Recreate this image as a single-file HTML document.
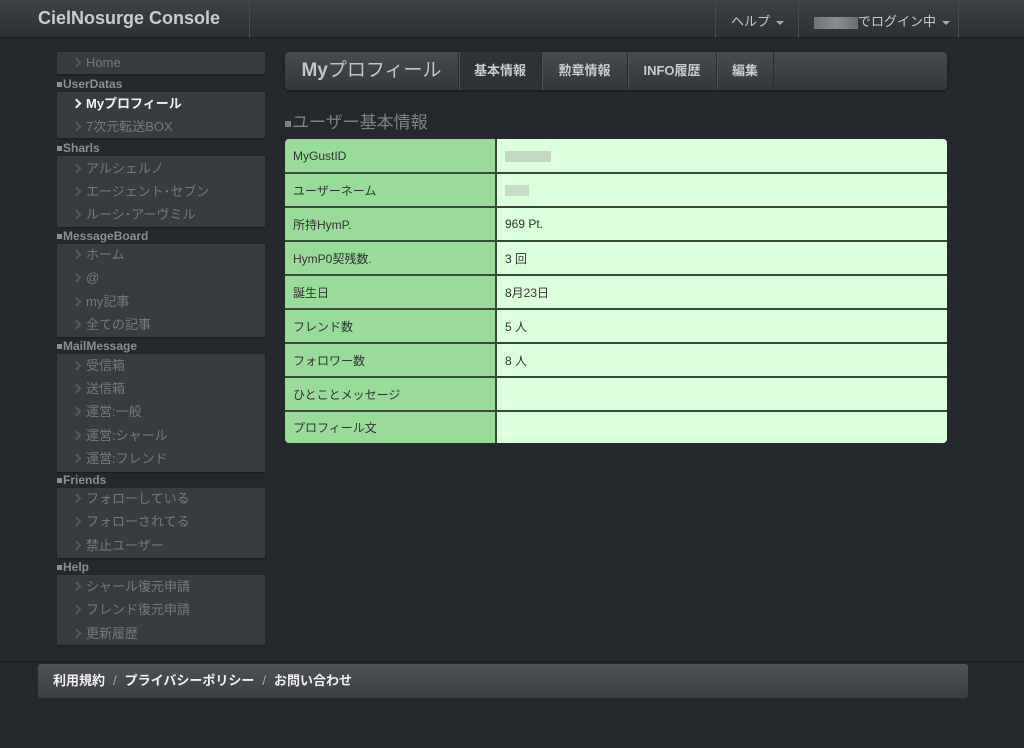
<!DOCTYPE html>
<html><head><meta charset="utf-8">
<style>
*{margin:0;padding:0;box-sizing:border-box}
body{width:1024px;height:748px;background:#25282d;font-family:"Liberation Sans","Noto Sans CJK JP",sans-serif;position:relative;overflow:hidden;font-size:13px}
.nav{position:absolute;left:0;top:0;width:1024px;height:38px;background:linear-gradient(#3e4247,#2c2f33);border-bottom:1px solid #1c1e21}
.brand{position:absolute;left:38px;top:8px;font-size:18px;font-weight:bold;color:#c9cbcd}
.div{position:absolute;top:0;width:1px;height:38px;background:#1f2124;border-right:1px solid #474a4f}
.navt{position:absolute;top:11px;font-size:13px;color:#c8cacc}
.caret{display:inline-block;width:0;height:0;border-left:4px solid transparent;border-right:4px solid transparent;border-top:4px solid #aaa;vertical-align:middle;margin-left:6px}
.blur{display:inline-block;background:linear-gradient(90deg,#6f7276,#8b8e91,#6a6d70);vertical-align:middle}
.box{position:absolute;left:57px;width:208px;background:#383c40;box-shadow:0 1px 1px #1b1d20}
.hd{position:absolute;left:57px;font-size:12px;font-weight:bold;color:#8a8d91;height:14px;line-height:14px}
.hd:before{content:"";display:inline-block;width:5px;height:5px;background:#8a8d91;margin-right:1px;vertical-align:1px}
.it{position:absolute;left:73px;font-size:13px;color:#74777b;line-height:16px}
.it:before{content:"";display:inline-block;width:5px;height:5px;border-right:2px solid #55585c;border-top:2px solid #55585c;transform:rotate(45deg);margin-right:6px;vertical-align:1px}
.it.on{color:#f1f1f1;font-weight:bold}
.it.on:before{border-color:#eee}
.tabs{position:absolute;left:285px;top:52px;width:662px;height:38px;border-radius:4px;background:linear-gradient(#474b50,#34373b);box-shadow:0 1px 2px #16181a}
.tt{position:absolute;top:0;height:38px;line-height:38px;text-align:center;color:#c9cbcd;font-size:13px;font-weight:bold;border-left:1px solid #2a2d30;box-shadow:inset 1px 0 #4e5257}
.h2{position:absolute;left:285px;top:108px;font-size:17px;color:#7d8084}
.h2:before{content:"";display:inline-block;width:6px;height:6px;background:#7d8084;margin-right:1px;vertical-align:1px}
table{position:absolute;left:285px;top:139px;width:662px;border-collapse:collapse;border-radius:4px;overflow:hidden}
td{height:34px;border-bottom:2px solid #3a4a3a;padding-left:8px;font-size:12px;color:#333}
td.l{width:211px;background:#98dc98;border-right:2px solid #3a4a3a}
td.v{background:#dcffdc}
tr:last-child td{border-bottom:none;height:32px}
.fline{position:absolute;left:0;top:661px;width:1024px;height:1px;background:#1b1d20}
.foot{position:absolute;left:38px;top:664px;width:930px;height:34px;border-radius:3px;background:linear-gradient(#4e5256,#3b3e42);font-size:13px;font-weight:bold;color:#f0f0f0;line-height:34px;padding-left:15px}
.foot span{color:#aaa;margin:0 8px;font-weight:normal}
</style></head><body>
<div class="nav">
 <div class="brand">CielNosurge Console</div>
 <div class="div" style="left:249px"></div>
 <div class="div" style="left:715px"></div>
 <div class="div" style="left:798px"></div>
 <div class="div" style="left:958px"></div>
 <div class="navt" style="left:731px">ヘルプ<span class="caret"></span></div>
 <div class="navt" style="left:814px"><span class="blur" style="width:44px;height:12px"></span>でログイン中<span class="caret"></span></div>
</div>

<div class="box" style="top:52px;height:22px"></div><div class="it" style="top:55px">Home</div>
<div class="hd" style="top:77px">UserDatas</div>
<div class="box" style="top:92px;height:46px"></div>
<div class="it on" style="top:96px">Myプロフィール</div>
<div class="it" style="top:119px">7次元転送BOX</div>
<div class="hd" style="top:141px">Sharls</div>
<div class="box" style="top:156px;height:71px"></div>
<div class="it" style="top:161px">アルシェルノ</div>
<div class="it" style="top:184px">エージェント･セブン</div>
<div class="it" style="top:207px">ルーシ･アーヴミル</div>
<div class="hd" style="top:229px">MessageBoard</div>
<div class="box" style="top:244px;height:93px"></div>
<div class="it" style="top:247px">ホーム</div>
<div class="it" style="top:270px">@</div>
<div class="it" style="top:294px">my記事</div>
<div class="it" style="top:317px">全ての記事</div>
<div class="hd" style="top:339px">MailMessage</div>
<div class="box" style="top:354px;height:118px"></div>
<div class="it" style="top:358px">受信箱</div>
<div class="it" style="top:381px">送信箱</div>
<div class="it" style="top:404px">運営:一般</div>
<div class="it" style="top:428px">運営:シャール</div>
<div class="it" style="top:451px">運営:フレンド</div>
<div class="hd" style="top:473px">Friends</div>
<div class="box" style="top:488px;height:70px"></div>
<div class="it" style="top:491px">フォローしている</div>
<div class="it" style="top:514px">フォローされてる</div>
<div class="it" style="top:538px">禁止ユーザー</div>
<div class="hd" style="top:560px">Help</div>
<div class="box" style="top:575px;height:70px"></div>
<div class="it" style="top:579px">シャール復元申請</div>
<div class="it" style="top:602px">フレンド復元申請</div>
<div class="it" style="top:626px">更新履歴</div>

<div class="tabs">
 <div style="position:absolute;left:0;top:0;width:173px;height:38px;line-height:38px;text-align:center;font-size:19px;color:#c2c4c6"><b>My</b>プロフィール</div>
 <div class="tt" style="left:173px;width:83px;background:#2f3236">基本情報</div>
 <div class="tt" style="left:256px;width:86px">勲章情報</div>
 <div class="tt" style="left:342px;width:89px">INFO履歴</div>
 <div class="tt" style="left:431px;width:57px">編集</div>
 <div class="tt" style="left:488px;width:1px"></div>
</div>
<div class="h2">ユーザー基本情報</div>
<table>
<tr><td class="l">MyGustID</td><td class="v"><span class="blur" style="width:46px;height:11px;background:#c4d8c4"></span></td></tr>
<tr><td class="l">ユーザーネーム</td><td class="v"><span class="blur" style="width:24px;height:11px;background:#c8dcc8"></span></td></tr>
<tr><td class="l">所持HymP.</td><td class="v">969 Pt.</td></tr>
<tr><td class="l">HymP0契残数.</td><td class="v">3 回</td></tr>
<tr><td class="l">誕生日</td><td class="v">8月23日</td></tr>
<tr><td class="l">フレンド数</td><td class="v">5 人</td></tr>
<tr><td class="l">フォロワー数</td><td class="v">8 人</td></tr>
<tr><td class="l">ひとことメッセージ</td><td class="v"></td></tr>
<tr><td class="l">プロフィール文</td><td class="v"></td></tr>
</table>
<div class="fline"></div>
<div class="foot">利用規約<span>/</span>プライバシーポリシー<span>/</span>お問い合わせ</div>
</body></html>
